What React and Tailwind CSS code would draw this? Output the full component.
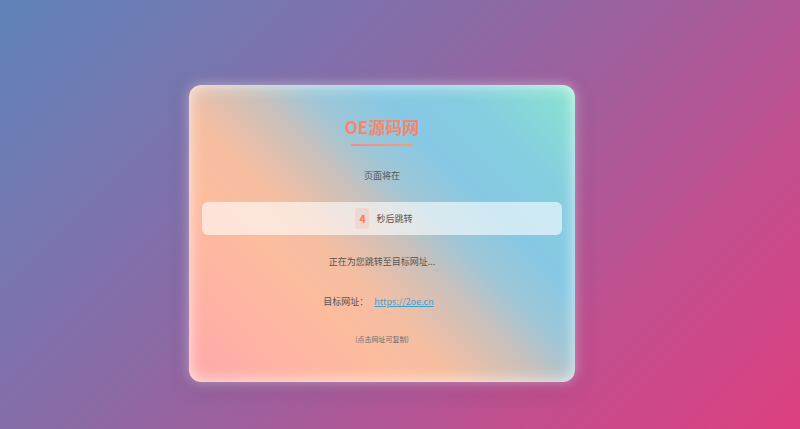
import React, { useEffect, useState } from 'react'

const App = () => {
  const [count, setCount] = useState(4)

  // keep the countdown static for the screenshot
  useEffect(() => {
    setCount(4)
  }, [])

  return (
    <div
      className="w-[800px] h-[429px] overflow-hidden bg-[linear-gradient(135deg,#5f83b9_0%,#8a6aa6_40%,#c04f8f_75%,#de4080_100%)] pt-[85px] pl-[189px]"
      style={{ fontFamily: '"Noto Sans CJK SC", "Noto Sans", sans-serif' }}
    >
      {/* card */}
      <div className="relative w-[386px] h-[297px] rounded-[12px] overflow-hidden bg-[linear-gradient(45deg,#ffa8aa_0%,#fdbc9e_30%,#f4bea2_40%,#c8c0bc_52%,#9ec6d6_60%,#86c8e4_70%,#84cde0_82%,#8ae4d0_100%)] shadow-[0_0_14px_rgba(255,255,255,0.45),0_6px_20px_rgba(80,40,90,0.25)]">
        <div className="absolute inset-0 rounded-[12px] shadow-[inset_0_0_16px_rgba(255,255,255,0.75)] pointer-events-none"></div>

        <div className="relative flex flex-col items-center px-[13px] pt-[30px]">
          {/* title */}
          <h1 className="text-[17px] leading-[24px] font-bold text-[#f4876b]">OE源码网</h1>
          <div className="mt-[5px] w-[62px] h-[2px] rounded-full bg-[linear-gradient(90deg,#ef8c8c,#f5a06e)]"></div>

          <p className="mt-[23px] text-[9px] leading-[14px] text-[#555]">页面将在</p>

          {/* countdown box */}
          <div className="mt-[19px] w-full h-[33px] rounded-[6px] bg-white/60 flex items-center justify-center gap-[7px] pl-[4px]">
            <span className="w-[14px] h-[21px] rounded-[3px] bg-[#f08a7a]/15 flex items-center justify-center text-[10px] font-extrabold text-[#f77f5e]">{count}</span>
            <span className="text-[9px] text-[#555]">秒后跳转</span>
          </div>

          <p className="mt-[20px] text-[9px] leading-[14px] text-[#555]">正在为您跳转至目标网址...</p>

          <p className="mt-[26px] text-[9px] leading-[14px] text-[#555] flex items-center pr-[7px]">
            目标网址：
            <a href="#" className="ml-[6px] text-[#3d9fd0] underline">https://2oe.cn</a>
          </p>

          <p className="mt-[24px] text-[7px] leading-[12px] text-[#6b6b6b]">(点击网址可复制)</p>
        </div>
      </div>
    </div>
  )
}

export default App
